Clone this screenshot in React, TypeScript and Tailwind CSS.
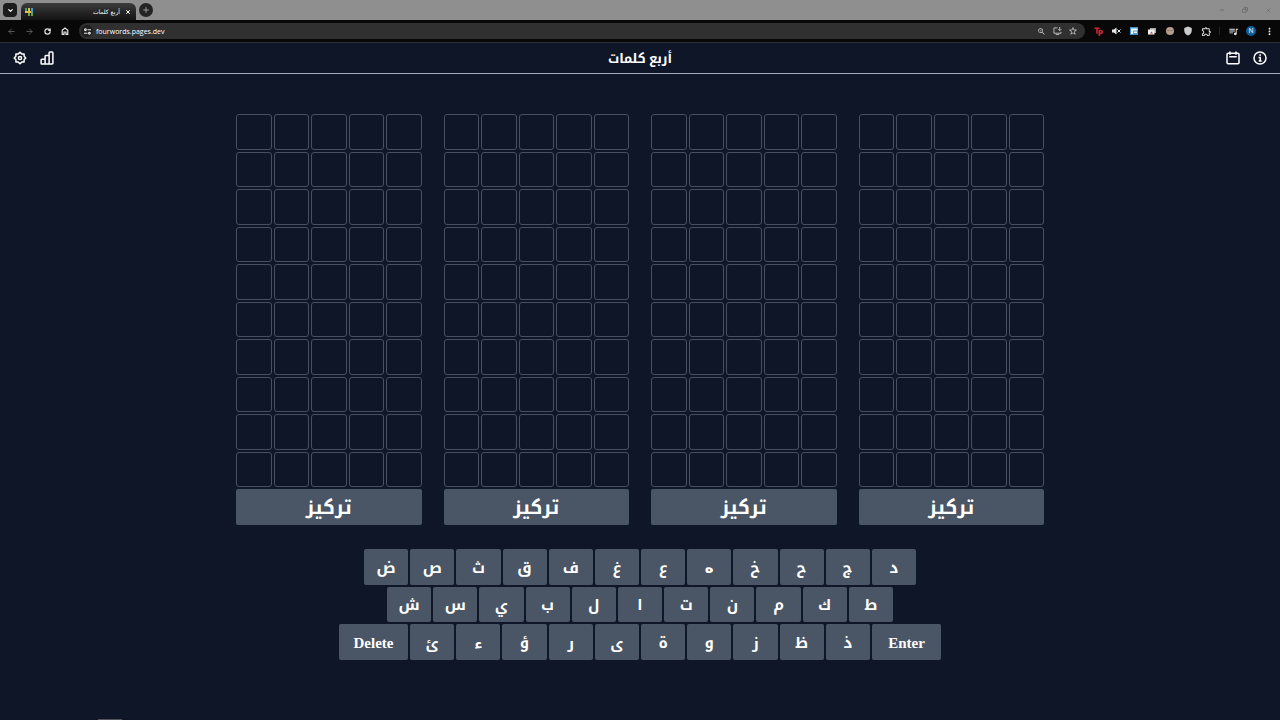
import React from "react";
import { ChevronDown, Plus, X, ArrowLeft, ArrowRight, Minus, Copy, RotateCw } from "lucide-react";
import { MdOutlineQueueMusic, MdOutlineExtension, MdShield, MdZoomIn, MdStarBorder, MdMoreVert } from "react-icons/md";

const rowOne = ["ض", "ص", "ث", "ق", "ف", "غ", "ع", "ه", "خ", "ح", "ج", "د"];
const rowTwo = ["ش", "س", "ي", "ب", "ل", "ا", "ت", "ن", "م", "ك", "ط"];
const rowThree = ["ئ", "ء", "ؤ", "ر", "ى", "ة", "و", "ز", "ظ", "ذ"];

function TabStrip() {
  return (
    <div className="flex h-5 items-stretch bg-[#8f8f8f]">
      <div className="flex items-center pl-[3px] pr-1">
        <button aria-label="Search tabs" className="flex size-[14px] items-center justify-center rounded-[4px] bg-[#1c1c1c] text-white">
          <ChevronDown size={7} strokeWidth={4} />
        </button>
      </div>
      <div className="mt-[3px] flex w-[115px] items-center rounded-t-md bg-gradient-to-b from-[#3c3c3c] to-[#141414] pl-1 pr-[5px] text-white">
        <svg viewBox="0 0 8 8" className="size-2" aria-hidden="true">
          <path d="M0 0h2v3H0z" fill="#3f9a8c" />
          <path d="M3 0h2v3h1v2H0V3h3z" fill="#e0c143" />
          <path d="M6 0h2v5H6z" fill="#4b9bd0" />
          <path d="M3 5h2v3H3zM6 5h2v3H6z" fill="#6a9e48" />
        </svg>
        <span dir="rtl" className="ml-auto font-['DejaVu_Sans',sans-serif] text-[6px]">أربع كلمات</span>
        <button aria-label="Close tab" className="ml-[5px]"><X size={6} strokeWidth={4} /></button>
      </div>
      <div className="flex items-center pl-[3px]">
        <button aria-label="New tab" className="flex size-[14px] items-center justify-center rounded-full bg-[#242424] text-[#9a9a9a]">
          <Plus size={8} strokeWidth={3} />
        </button>
      </div>
      <div className="ml-auto flex items-center gap-[17px] pr-2 text-[#646464]">
        <button aria-label="Minimize"><Minus size={6} strokeWidth={3} /></button>
        <button aria-label="Restore"><Copy size={6} strokeWidth={3} className="-scale-x-100" /></button>
        <button aria-label="Close"><X size={7} /></button>
      </div>
    </div>
  );
}

function ToolbarSlot({ label, children }: { label: string; children: React.ReactNode }) {
  return (
    <button aria-label={label} className="flex h-4 w-[18px] items-center justify-center">
      {children}
    </button>
  );
}

function AddressBar() {
  return (
    <div className="flex h-[23px] items-center border-b border-[#2a2e33] bg-[#080808] pl-[2px] pr-[2px] text-[#e6e6e6]">
      <ToolbarSlot label="Back"><ArrowLeft size={9} className="text-[#6d6d6d]" /></ToolbarSlot>
      <ToolbarSlot label="Forward"><ArrowRight size={9} className="text-[#6d6d6d]" /></ToolbarSlot>
      <ToolbarSlot label="Reload"><RotateCw size={7} strokeWidth={4} /></ToolbarSlot>
      <ToolbarSlot label="Home">
        <svg viewBox="0 0 8 8" className="size-2" fill="none" stroke="currentColor" strokeWidth="1.2" aria-hidden="true">
          <path d="M1.2 3.3 4 1l2.8 2.3v4.1H5V5H3v2.4H1.2z" />
        </svg>
      </ToolbarSlot>
      <div className="ml-[5px] flex h-4 flex-1 items-center rounded-full bg-[#303030] pl-[2px] pr-1">
        <button aria-label="Site information" className="flex size-3 items-center justify-center rounded-full bg-[#1f1f1f]">
          <svg viewBox="0 0 8 8" className="size-[7px]" fill="none" stroke="currentColor" strokeWidth="1.2" aria-hidden="true">
            <path d="M4 2h4M0 6h4" />
            <circle cx="1.600" cy="2" r="1" />
            <circle cx="6.200" cy="6" r="1" />
          </svg>
        </button>
        <input aria-label="Address" defaultValue="fourwords.pages.dev" className="ml-[3px] h-3 min-w-0 flex-1 bg-transparent font-['Open_Sans',sans-serif] text-[7px] font-medium text-white outline-none" />
        <div className="flex items-center text-[#c8c8c8]">
          <button aria-label="Zoom" className="flex w-4 justify-center"><MdZoomIn size={9} /></button>
          <button aria-label="Install" className="flex w-4 justify-center">
            <svg viewBox="0 0 10 9" className="h-2 w-[9px]" fill="none" stroke="currentColor" aria-hidden="true">
              <path d="M5 1H1v6h8V5.500M3 8.500h4M7.500 0v4M5.800 2.500 7.500 4.200l1.700-1.700" />
            </svg>
          </button>
          <button aria-label="Bookmark" className="flex w-4 justify-center"><MdStarBorder size={10} /></button>
        </div>
      </div>
      <div className="ml-1 flex items-center">
        <ToolbarSlot label="Tp extension">
          <svg viewBox="0 0 9 9" className="size-[9px]" fill="none" stroke="#d02438" strokeWidth="1.600" aria-hidden="true">
            <path d="M.5 1.300h5M3 1.300v5.500M5.300 9V3.500h1.400a1.300 1.300 0 0 1 0 2.900H5.300" />
          </svg>
        </ToolbarSlot>
        <ToolbarSlot label="Mute">
          <svg viewBox="0 0 9 8" className="h-2 w-[9px]" aria-hidden="true">
            <path d="M0 2.600h1.800L4.500.5v7L1.800 5.400H0z" fill="currentColor" />
            <path d="m5.500 2.500 3 3m0-3-3 3" fill="none" stroke="currentColor" />
          </svg>
        </ToolbarSlot>
        <ToolbarSlot label="Reader extension">
          <svg viewBox="0 0 8 8" className="size-2" aria-hidden="true">
            <path d="M0 0h8v8H0z" fill="#3f94d6" />
            <path d="M1 1.500h6.500v2H3.200V7H1zM4 4.500h3v1.600H4z" fill="#f2f7fb" />
          </svg>
        </ToolbarSlot>
        <ToolbarSlot label="Picture extension">
          <svg viewBox="0 0 8 8" className="size-2" aria-hidden="true">
            <path d="M2 1h6v5H2z" fill="#a8a8a8" />
            <path d="M0 2.500h6.500v5H0z" fill="#efefef" />
            <path d="m2 6.500 1.500-2 1.500 2z" fill="#bd4951" />
          </svg>
        </ToolbarSlot>
        <ToolbarSlot label="Cookie extension">
          <svg viewBox="0 0 8 8" className="size-2" aria-hidden="true">
            <circle cx="4" cy="4" r="4" fill="#b59d91" />
            <path d="M1.500 3h2v1h-2zm3 0h2v1h-2z" fill="#8a7067" />
          </svg>
        </ToolbarSlot>
        <ToolbarSlot label="Shield extension"><MdShield size={10} className="text-[#cccccc]" /></ToolbarSlot>
        <ToolbarSlot label="Extensions"><MdOutlineExtension size={11} /></ToolbarSlot>
        <span className="ml-1 mr-1 h-2 w-px bg-[#252525]" />
        <ToolbarSlot label="Media"><MdOutlineQueueMusic size={11} /></ToolbarSlot>
        <ToolbarSlot label="Profile">
          <span className="flex size-[10px] items-center justify-center rounded-full bg-[#0b5d9c] font-[Roboto,sans-serif] text-[7px] leading-none">N</span>
        </ToolbarSlot>
        <ToolbarSlot label="Menu"><MdMoreVert size={11} /></ToolbarSlot>
      </div>
    </div>
  );
}

function GearIcon() {
  return (
    <svg viewBox="0 0 14 14" className="size-[14px]" fill="none" stroke="currentColor" strokeWidth="1.500" strokeLinejoin="round" aria-hidden="true">
      <path d="M5.300 2.900 7 1.200l1.700 1.700 2.400 0 0 2.400L12.800 7l-1.700 1.700v2.400H8.700L7 12.800l-1.700-1.700H2.900V8.700L1.200 7l1.700-1.700V2.900z" />
      <circle cx="7" cy="7" r="1.600" />
    </svg>
  );
}

function ChartIcon() {
  return (
    <svg viewBox="0 0 14 14" className="size-[14px]" fill="none" stroke="currentColor" strokeWidth="1.500" strokeLinejoin="round" aria-hidden="true">
      <path d="M5.100 13H1.900a.8.800 0 0 1-.8-.8V9a.8.800 0 0 1 .8-.8h3.200zM5.100 13V5.300a.8.800 0 0 1 .8-.8h3.200V13zM9.100 13V1.900a.8.800 0 0 1 .8-.8h2.200a.8.800 0 0 1 .8.800v10.300a.8.800 0 0 1-.8.800z" />
    </svg>
  );
}

function CalendarIcon() {
  return (
    <svg viewBox="0 0 14 14" className="size-[14px]" fill="none" stroke="currentColor" strokeWidth="1.500" strokeLinecap="round" aria-hidden="true">
      <rect x="1" y="2.200" width="12" height="10.600" rx="1.200" />
      <path d="M4 1v2.300M10 1v2.300M3.800 5.700h6.400" />
    </svg>
  );
}

function InfoIcon() {
  return (
    <svg viewBox="0 0 14 14" className="size-[14px]" fill="none" stroke="currentColor" strokeWidth="1.500" aria-hidden="true">
      <circle cx="7" cy="7" r="6" />
      <path d="M5.600 6.400H7.200v3.800M5.700 10.100h3M6.300 4.100h1.700" />
    </svg>
  );
}

function Key({ label, className = "" }: { label: string; className?: string }) {
  return (
    <button className={`flex min-w-0 items-center justify-center rounded-xs bg-[#4a5565] pt-0.5 text-[15px] font-bold text-white ${className}`}>
      {label}
    </button>
  );
}

export default function App() {
  return (
    <div className="flex min-h-screen flex-col bg-[#0f1627] font-['Liberation_Serif','Noto_Kufi_Arabic','DejaVu_Sans',serif]">
      <TabStrip />
      <AddressBar />
      <header className="flex h-[31px] items-center justify-between border-b border-[#a5acbb] px-[13px] text-white">
        <div className="flex gap-[13px]">
          <button aria-label="Settings"><GearIcon /></button>
          <button aria-label="Statistics"><ChartIcon /></button>
        </div>
        <h1 dir="rtl" className="pt-0.5 text-[13px] font-bold">أربع كلمات</h1>
        <div className="flex gap-[13px]">
          <button aria-label="Calendar"><CalendarIcon /></button>
          <button aria-label="Information"><InfoIcon /></button>
        </div>
      </header>
      <main className="flex flex-1 flex-col items-center gap-6 pt-10">
        <div className="grid w-full max-w-[808px] grid-cols-4 gap-[22px]">
          {[0, 1, 2, 3].map((board) => (
            <div key={board} className="grid h-[411px] grid-cols-5 grid-rows-11 gap-0.5">
              {Array.from({ length: 50 }, (_, i) => (
                <div key={i} className="rounded-[3px] border border-[#465062]" />
              ))}
              <button className="col-span-5 rounded-xs bg-[#4a5565] pt-0.5 text-[19px] font-bold text-white">تركيز</button>
            </div>
          ))}
        </div>
        <div className="grid h-[111px] w-full max-w-[602px] grid-rows-3 justify-items-center gap-0.5">
          <div className="grid w-full max-w-[552px] grid-cols-12 gap-0.5">
            {rowOne.map((k) => (
              <Key key={k} label={k} className={k === "ه" ? "font-['DejaVu_Sans',sans-serif]" : ""} />
            ))}
          </div>
          <div className="grid w-full max-w-[506px] grid-cols-11 gap-0.5">
            {rowTwo.map((k) => <Key key={k} label={k} />)}
          </div>
          <div className="flex w-full gap-0.5">
            <Key label="Delete" className="w-[69px]" />
            {rowThree.map((k) => <Key key={k} label={k} className="flex-1" />)}
            <Key label="Enter" className="w-[69px]" />
          </div>
        </div>
      </main>
      <footer className="px-[98px]">
        <div className="h-px w-6 bg-[#53535b]" />
      </footer>
    </div>
  );
}
